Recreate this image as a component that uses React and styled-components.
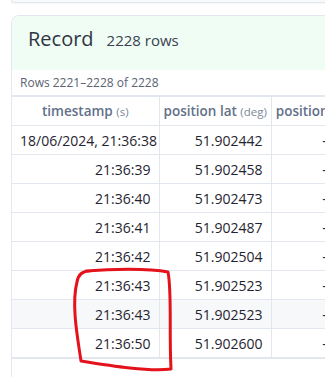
import React from 'react'
import styled, { createGlobalStyle } from 'styled-components'

const GlobalStyle = createGlobalStyle`
  body {
    margin: 0;
    background: #ffffff;
    overflow: hidden;
    font-family: 'Open Sans', 'Noto Sans', sans-serif;
  }
`

const rows = [
  { time: '18/06/2024, 21:36:38', lat: '51.902442', long: '-8.492311' },
  { time: '21:36:39', lat: '51.902458', long: '-8.492305' },
  { time: '21:36:40', lat: '51.902473', long: '-8.492298' },
  { time: '21:36:41', lat: '51.902487', long: '-8.492290' },
  { time: '21:36:42', lat: '51.902504', long: '-8.492281' },
  { time: '21:36:43', lat: '51.902523', long: '-8.492272' },
  { time: '21:36:43', lat: '51.902523', long: '-8.492272', shaded: true },
  { time: '21:36:50', lat: '51.902600', long: '-8.492230' }
]

export default function App () {
  return (
    <Page>
      <GlobalStyle />
      <PrevCard />
      <Card>
        <CardHeader>
          <Title>Record</Title>
          <Count>2228 rows</Count>
        </CardHeader>
        <Meta>Rows 2221–2228 of 2228</Meta>
        <Table>
          <colgroup>
            <col style={{ width: 147 }} />
            <col style={{ width: 112 }} />
            <col style={{ width: 124 }} />
          </colgroup>
          <thead>
            <tr>
              <Th>timestamp <Unit>(s)</Unit></Th>
              <Th>position lat <Unit>(deg)</Unit></Th>
              <Th>position long <Unit>(deg)</Unit></Th>
            </tr>
          </thead>
          <tbody>
            {rows.map((r, i) => (
              <Tr key={i} $shaded={r.shaded} $last={i === rows.length - 1}>
                <Td>{r.time}</Td>
                <Td>{r.lat}</Td>
                <Td>{r.long}</Td>
              </Tr>
            ))}
          </tbody>
        </Table>
        <CardRest />
      </Card>
      <Scribble width='325' height='377' viewBox='0 0 325 377'>
        <path
          d='M86 271 C110 269 148 268 168 272 C172 292 169 330 171 369 C150 372 112 366 81 361 C78 340 71 305 77 282 C78 275 82 271 90 271'
          fill='none'
          stroke='#e3121b'
          strokeWidth='3'
          strokeLinecap='round'
          strokeLinejoin='round'
        />
      </Scribble>
    </Page>
  )
}

// Style

const Page = styled.div`
  position: relative;
  width: 325px;
  height: 377px;
  overflow: hidden;
`
const PrevCard = styled.div`
  margin-left: 11px;
  width: 600px;
  height: 2px;
  background: #f7f9fb;
  border: 1px solid #e2e6ee;
  border-top: none;
  border-radius: 0 0 8px 8px;
  box-shadow: 0 1px 2px rgba(0, 0, 0, 0.04);
`
const Card = styled.div`
  margin: 12px 0 0 11px;
  width: 600px;
  border: 1px solid #e2e6ee;
  border-radius: 8px;
  overflow: hidden;
  background: #ffffff;
`
const CardHeader = styled.div`
  display: flex;
  align-items: baseline;
  gap: 13px;
  height: 54px;
  padding: 9px 16px 0;
  box-sizing: border-box;
  background: #f0fdf4;
`
const Title = styled.span`
  font-size: 20px;
  color: #2f3542;
`
const Count = styled.span`
  font-size: 15px;
  color: #3b4150;
`
const Meta = styled.div`
  height: 25px;
  padding-left: 8px;
  display: flex;
  align-items: center;
  font-size: 12px;
  color: #5b6372;
`
const Table = styled.table`
  width: 383px;
  border-collapse: collapse;
  table-layout: fixed;
  border-top: 2px solid #e2e6ee;
  font-size: 14px;
`
const Th = styled.th`
  height: 28px;
  padding: 0 4px;
  text-align: center;
  white-space: nowrap;
  overflow: hidden;
  font-size: 13.5px;
  font-weight: 600;
  color: #627089;
  border-right: 1px solid #e2e6ee;
  border-bottom: 1px solid #e2e6ee;
`
const Unit = styled.span`
  font-size: 11.5px;
  font-weight: 400;
  color: #7c879b;
`
const Tr = styled.tr`
  background: ${p => (p.$shaded ? '#f7f8fa' : '#ffffff')};
  td {
    border-bottom: ${p => (p.$last ? '2px' : '1px')} solid #e2e6ee;
  }
`
const Td = styled.td`
  height: 28px;
  padding: 0 8px;
  text-align: right;
  white-space: nowrap;
  overflow: hidden;
  color: #1f2430;
  border-right: 1px solid #e2e6ee;
`
const CardRest = styled.div`
  height: 40px;
`
const Scribble = styled.svg`
  position: absolute;
  top: 0;
  left: 0;
  pointer-events: none;
`
